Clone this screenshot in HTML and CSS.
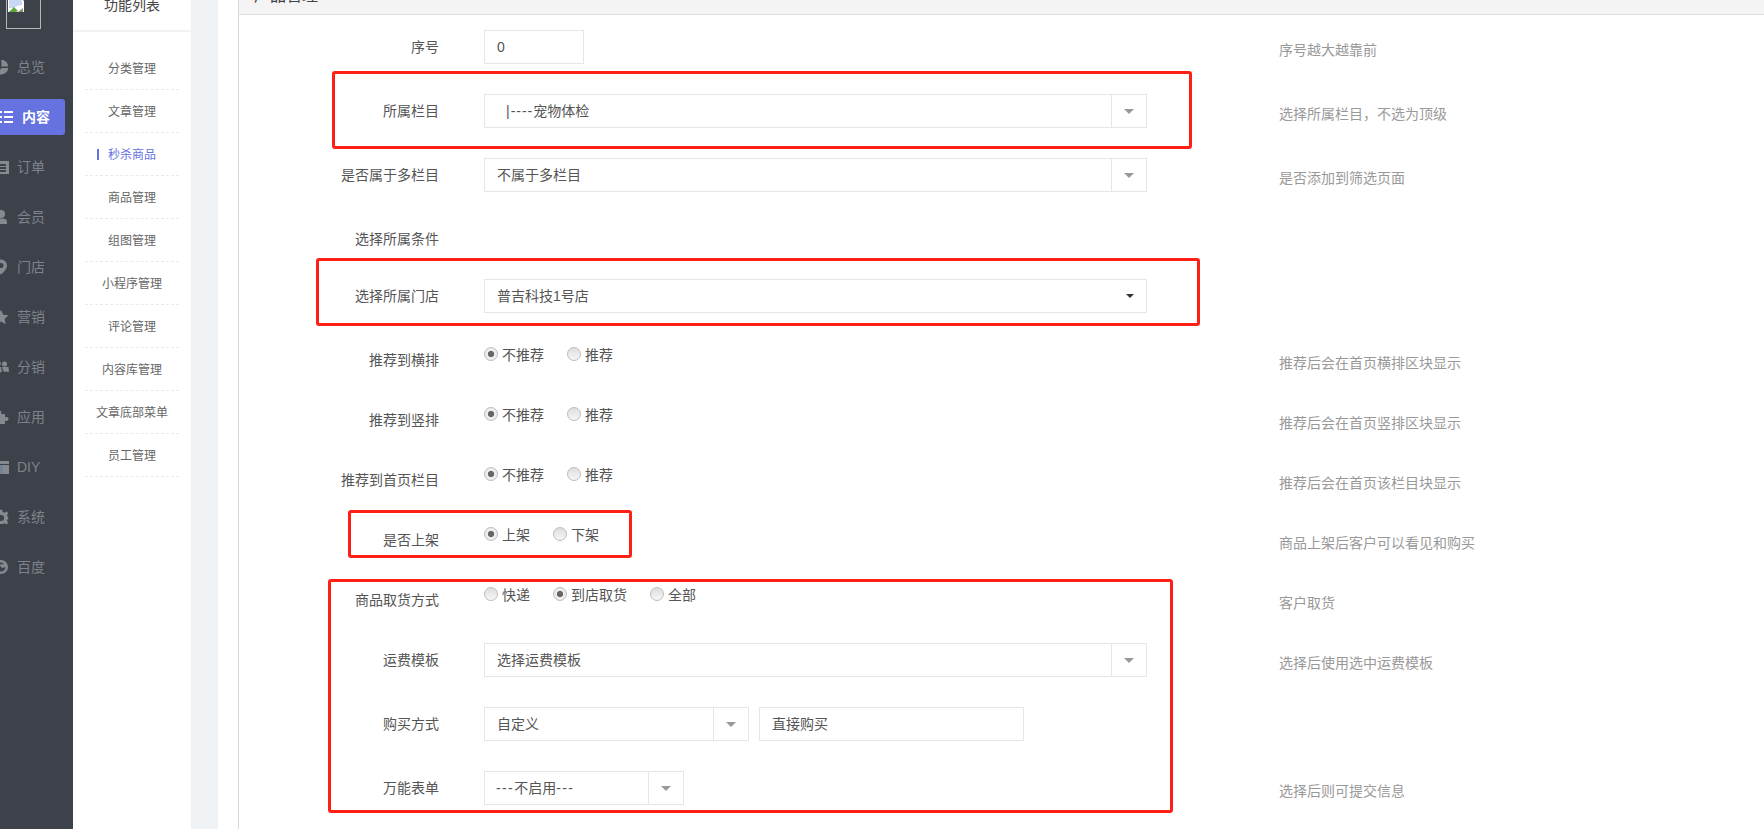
FILE: index.html
```html
<!DOCTYPE html>
<html lang="zh-CN">
<head>
<meta charset="utf-8">
<title>产品管理</title>
<link rel="stylesheet" href="styles.css">
</head>
<body>
<aside class="sidebar">
  <div class="logo">
    <svg class="logo-broken" viewBox="0 0 16 16" width="16" height="16"><path d="M0 -4H11L16 1V12H0Z" fill="#fff"/><path d="M1 -3H10L14 1V5L9 6 6 8 1 8Z" fill="#c8d8f4"/><path d="M1 12L6 7 10 11 8 12Z" fill="#5fa83c"/><path d="M10 12L15 8V12Z" fill="#7f8f70"/></svg>
  </div>
  <nav class="nav">
    <a class="nav-item"><svg class="ico" viewBox="0 0 16 16"><path d="M7 1.5V8.2L2.6 13A7 7 0 0 1 7 1.5Z"/><path d="M8.4 .8A7 7 0 0 1 15.2 7.6H8.4Z"/><path d="M15.2 9A7 7 0 0 1 4 14L8.6 9Z"/></svg><span>总览</span></a>
    <a class="nav-item is-active"><svg class="ico" viewBox="0 0 16 16"><path d="M2 2H5V4H2ZM7 2H16V4H7ZM2 7H5V9H2ZM7 7H16V9H7ZM2 12H5V14H2ZM7 12H16V14H7Z"/></svg><span>内容</span></a>
    <a class="nav-item"><svg class="ico" viewBox="0 0 16 16"><path fill-rule="evenodd" d="M0 2H16V15H0ZM4 5V7H13V5ZM4 8V10H13V8ZM4 11V13H13V11Z"/></svg><span>订单</span></a>
    <a class="nav-item"><svg class="ico" viewBox="0 0 16 16"><circle cx="8" cy="5" r="4"/><path d="M2 15V12.5C2 10.5 4 9.5 5.5 9.5H10.5C12 9.5 14 10.5 14 12.5V15Z"/></svg><span>会员</span></a>
    <a class="nav-item"><svg class="ico" viewBox="0 0 16 16"><path fill-rule="evenodd" d="M8 .5A6 6 0 0 1 14 6.5C14 10 10 14 8 15.5 6 14 2 10 2 6.500A6 6 0 0 1 8 .5ZM8 4A2.500 2.500 0 1 0 8 9 2.500 2.500 0 0 0 8 4Z"/></svg><span>门店</span></a>
    <a class="nav-item"><svg class="ico" viewBox="0 0 16 16"><path d="M8 .8L10.200 5.700 15.500 6.300 11.600 9.900 12.700 15.200 8 12.500 3.300 15.200 4.400 9.900 .5 6.300 5.800 5.700Z"/></svg><span>营销</span></a>
    <a class="nav-item"><svg class="ico" viewBox="0 0 16 16"><circle cx="5" cy="4.500" r="2.800"/><circle cx="11.500" cy="5" r="2.500"/><path d="M1 8.500L8 8 9 13 3 14ZM9 8L15.500 8 16 13 10.500 12.500Z"/></svg><span>分销</span></a>
    <a class="nav-item"><svg class="ico" viewBox="0 0 16 16"><path d="M1 5H5C4 3 5 1.500 6.500 1.500S9 3 8 5H12V8.500C14 7.500 15.500 8.500 15.500 10S14 12.500 12 11.500V15H1Z"/></svg><span>应用</span></a>
    <a class="nav-item"><svg class="ico" viewBox="0 0 16 16"><path d="M0 2H16V5H0Z"/><path class="ico-tint" d="M0 6H10V15H0Z"/><path d="M10 6H16V15H10Z"/></svg><span>DIY</span></a>
    <a class="nav-item"><svg class="ico" viewBox="0 0 16 16"><path fill-rule="evenodd" d="M6.800 .8H9.200L9.700 3 11.500 3.800 13.500 2.600 15.200 4.300 14 6.300 14.800 8 15.500 8.800V9.200L14.800 10 14 11.700 15.200 13.700 13.500 15.400 11.500 14.200 9.700 15H6.300L4.500 14.200 2.500 15.400 .8 13.700 2 11.700 1.200 10 .5 9.200V8.800L1.200 8 2 6.300 .8 4.300 2.500 2.600 4.500 3.800 6.300 3ZM8 6A3 3 0 1 0 8 12 3 3 0 0 0 8 6Z"/></svg><span>系统</span></a>
    <a class="nav-item"><svg class="ico" viewBox="0 0 16 16"><path fill-rule="evenodd" d="M8 1A7 7 0 1 1 8 15 7 7 0 0 1 8 1ZM8 3.500A4.500 4.500 0 0 0 3.500 8C3.500 10 5 12 8 12.500 10.500 12.500 12.500 10.500 12.500 8L9 9 6 5.500 11 5A4.500 4.500 0 0 0 8 3.500Z"/></svg><span>百度</span></a>
  </nav>
</aside>

<aside class="submenu">
  <h2 class="submenu-title"><span>功能列表</span></h2>
  <ul class="submenu-list">
    <li class="submenu-item">分类管理</li>
    <li class="submenu-item">文章管理</li>
    <li class="submenu-item is-current">秒杀商品</li>
    <li class="submenu-item">商品管理</li>
    <li class="submenu-item">组图管理</li>
    <li class="submenu-item">小程序管理</li>
    <li class="submenu-item">评论管理</li>
    <li class="submenu-item">内容库管理</li>
    <li class="submenu-item">文章底部菜单</li>
    <li class="submenu-item">员工管理</li>
  </ul>
</aside>

<main class="main">
  <div class="content">
    <section class="panel">
      <header class="panel-heading"><span>产品管理</span></header>
      <form class="form">
        <div class="row">
          <label class="row-label">序号</label>
          <div class="row-control"><div class="field field-num">0</div></div>
          <p class="row-help">序号越大越靠前</p>
        </div>
        <div class="row">
          <label class="row-label">所属栏目</label>
          <div class="row-control"><div class="select"><div class="select-value select-indent"><span class="dash">|----</span>宠物体检</div><div class="select-caret"><i class="caret"></i></div></div></div>
          <p class="row-help">选择所属栏目，不选为顶级</p>
        </div>
        <div class="row">
          <label class="row-label">是否属于多栏目</label>
          <div class="row-control"><div class="select"><div class="select-value">不属于多栏目</div><div class="select-caret"><i class="caret"></i></div></div></div>
          <p class="row-help">是否添加到筛选页面</p>
        </div>
        <div class="row row-short">
          <label class="row-label">选择所属条件</label>
          <div class="row-control"></div>
        </div>
        <div class="row">
          <label class="row-label">选择所属门店</label>
          <div class="row-control"><div class="select"><div class="select-value">普吉科技1号店</div><div class="select-plain"><i class="caret caret-dark"></i></div></div></div>
        </div>
        <div class="row row-radio">
          <label class="row-label">推荐到横排</label>
          <div class="row-control radios"><span class="radio is-on">不推荐</span><span class="radio">推荐</span></div>
          <p class="row-help">推荐后会在首页横排区块显示</p>
        </div>
        <div class="row row-radio">
          <label class="row-label">推荐到竖排</label>
          <div class="row-control radios"><span class="radio is-on">不推荐</span><span class="radio">推荐</span></div>
          <p class="row-help">推荐后会在首页竖排区块显示</p>
        </div>
        <div class="row row-radio">
          <label class="row-label">推荐到首页栏目</label>
          <div class="row-control radios"><span class="radio is-on">不推荐</span><span class="radio">推荐</span></div>
          <p class="row-help">推荐后会在首页该栏目块显示</p>
        </div>
        <div class="row row-radio">
          <label class="row-label">是否上架</label>
          <div class="row-control radios"><span class="radio is-on">上架</span><span class="radio">下架</span></div>
          <p class="row-help">商品上架后客户可以看见和购买</p>
        </div>
        <div class="row row-radio">
          <label class="row-label">商品取货方式</label>
          <div class="row-control radios"><span class="radio">快递</span><span class="radio is-on">到店取货</span><span class="radio">全部</span></div>
          <p class="row-help">客户取货</p>
        </div>
        <div class="row">
          <label class="row-label">运费模板</label>
          <div class="row-control"><div class="select"><div class="select-value">选择运费模板</div><div class="select-caret"><i class="caret"></i></div></div></div>
          <p class="row-help">选择后使用选中运费模板</p>
        </div>
        <div class="row">
          <label class="row-label">购买方式</label>
          <div class="row-control row-pair"><div class="select select-half"><div class="select-value">自定义</div><div class="select-caret"><i class="caret"></i></div></div><div class="field field-half">直接购买</div></div>
        </div>
        <div class="row">
          <label class="row-label">万能表单</label>
          <div class="row-control"><div class="select select-small"><div class="select-value select-tight"><span class="dash dash-wide">---</span>不启用<span class="dash dash-wide">---</span></div><div class="select-caret"><i class="caret"></i></div></div></div>
          <p class="row-help">选择后则可提交信息</p>
        </div>
      </form>
    </section>
  </div>
</main>

<div class="mark mark-a"></div>
<div class="mark mark-b"></div>
<div class="mark mark-c"></div>
<div class="mark mark-d"></div>
</body>
</html>
```
FILE: styles.css
```css
* { box-sizing: border-box; }
html, body { height: 100%; }
body {
  margin: 0;
  display: flex;
  height: 829px;
  overflow: hidden;
  background: #fff;
  color: #555;
  font: 14px/20px "Liberation Sans", "Noto Sans CJK SC", sans-serif;
}

/* dark icon rail */
.sidebar { flex: 0 0 73px; background: #3d4149; overflow: hidden; }
.logo {
  width: 35px;
  height: 29px;
  margin-left: 6px;
  border: 1px solid #b4b6b8;
  border-top: 0;
  overflow: hidden;
}
.logo-broken { display: block; margin-left: 1px; }
.nav { display: flex; flex-direction: column; gap: 14px; margin-top: 20px; }
.nav-item {
  display: flex;
  align-items: center;
  gap: 8px;
  width: 72px;
  height: 36px;
  margin-left: -7px;
  color: #7d838b;
  white-space: nowrap;
}
.ico { flex: none; width: 16px; height: 16px; fill: #858a91; }
.ico-tint { fill: #6f8399; }
.nav-item.is-active {
  padding-left: 4px;
  gap: 9px;
  background: #6672e0;
  border-radius: 0 3px 3px 0;
  color: #fff;
  font-weight: 700;
}
.is-active .ico { fill: #fff; }

/* secondary menu */
.submenu { flex: 0 0 119px; background: #fff; border-right: 1px solid #f0f0f0; overflow: hidden; }
.submenu-title {
  height: 32px;
  margin: 0;
  overflow: hidden;
  border-bottom: 2px solid #f2f2f2;
  color: #444;
  font-size: 14px;
  font-weight: 400;
  line-height: 20px;
  text-align: center;
}
.submenu-title span { display: block; margin-top: -5px; }
.submenu-list { margin: 15px 12px 0; padding: 0; list-style: none; }
.submenu-item {
  position: relative;
  height: 43px;
  border-bottom: 1px dashed #eaeaea;
  color: #666;
  font-size: 12px;
  line-height: 45px;
  text-align: center;
  white-space: nowrap;
}
.submenu-item.is-current { color: #6672e0; }
.submenu-item.is-current::before {
  content: "";
  position: absolute;
  left: 12px;
  top: 16px;
  width: 2px;
  height: 11px;
  background: #6672e0;
}

/* main column */
.main { flex: 1; min-width: 0; padding-left: 26px; background: #f0f3f5; }
.content { height: 100%; padding-left: 20px; background: #fff; }
.panel { height: 100%; border-left: 1px solid #d9d9d9; }
.panel-heading {
  height: 15px;
  overflow: hidden;
  background: #f4f4f4;
  border-bottom: 1px solid #ddd;
  color: #444;
  font-size: 16px;
  line-height: 20px;
}
.panel-heading span { display: block; margin: -14px 0 0 15px; }

.form { padding-top: 15px; }
.row { display: flex; align-items: center; height: 34px; margin-bottom: 30px; }
.row-short { margin-bottom: 23px; }
.row-radio { margin-bottom: 26px; }
.row-label { flex: 0 0 200px; color: #555; text-align: right; }
.row-control { flex: 0 0 663px; margin-left: 45px; }
.row-help { flex: none; margin: 6px 0 0 132px; color: #999; }
.row-pair { display: flex; gap: 10px; }

.field, .select {
  height: 34px;
  border: 1px solid #e5e6e7;
  background: #fff;
  color: #555;
  line-height: 32px;
}
.field { padding: 0 12px; }
.field-num { width: 100px; }
.field-half { width: 265px; }
.select { display: flex; }
.select-half { width: 265px; }
.select-small { width: 200px; }
.select-value { flex: 1; min-width: 0; padding-left: 12px; white-space: nowrap; }
.select-indent { padding-left: 21px; }
.select-tight { padding-left: 11px; }
.dash { letter-spacing: 1px; }
.dash-wide { letter-spacing: 1.4px; }
.select-caret, .select-plain {
  display: flex;
  flex: 0 0 35px;
  align-items: center;
  justify-content: center;
}
.select-caret { border-left: 1px solid #e5e6e7; }
.caret {
  display: block;
  width: 0;
  height: 0;
  border-top: 5px solid #999;
  border-left: 5px solid transparent;
  border-right: 5px solid transparent;
}
.caret-dark { border-top: 4px solid #333; border-left-width: 4px; border-right-width: 4px; margin-top: -1px; margin-left: 2px; }

.radios { display: flex; align-self: flex-start; gap: 23px; padding-top: 2px; }
.radio { display: flex; align-items: flex-start; gap: 4px; line-height: 20px; color: #555; }
.radio::before {
  content: "";
  flex: none;
  width: 12px;
  height: 12px;
  margin-top: 2px;
  border: 1px solid #bdbdbd;
  border-radius: 50%;
  background: linear-gradient(#dedede, #f6f6f6);
}
.radio.is-on::before {
  background: radial-gradient(circle, #666 0 2.8px, #ececec 3.4px);
}

/* red review annotations over the form */
.mark { position: absolute; border: 3px solid #ff2015; border-radius: 3px; pointer-events: none; }
.mark-a { left: 332px; top: 71px; width: 860px; height: 78px; }
.mark-b { left: 316px; top: 258px; width: 884px; height: 68px; }
.mark-c { left: 348px; top: 510px; width: 284px; height: 48px; }
.mark-d { left: 328px; top: 579px; width: 845px; height: 234px; }
```
